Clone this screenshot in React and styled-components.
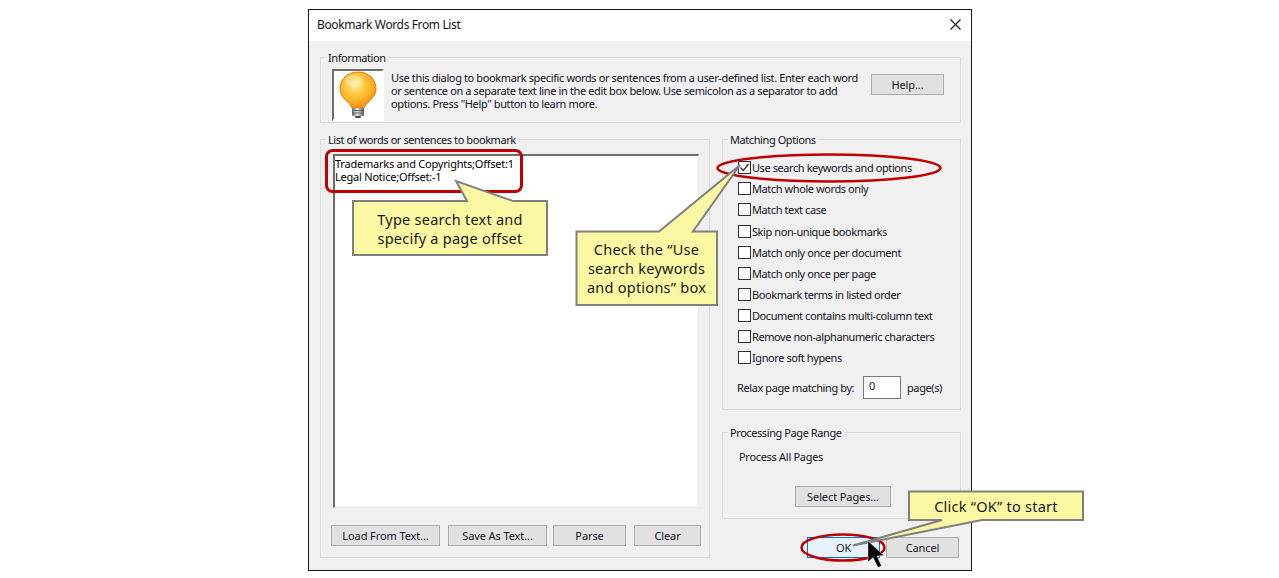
import React from "react";
import styled, { createGlobalStyle } from "styled-components";

const Global = createGlobalStyle`
  html, body { margin: 0; padding: 0; background: #fff; height: 578px; overflow: hidden; }
  body { font-family: "Noto Sans", "Open Sans", sans-serif; font-size: 11px; color: #14141e; }
  * { box-sizing: border-box; }
`;

const Page = styled.div`
  width: 1279px;
  height: 578px;
  padding: 9px 0 0 308px;
`;

const Dialog = styled.div`
  position: relative;
  width: 664px;
  height: 562px;
  border: 1px solid #1a1a1a;
  background: #f0f0f0;
  display: flex;
  flex-direction: column;
`;

const TitleBar = styled.div`
  height: 31px;
  flex: none;
  background: #fff;
  display: flex;
  align-items: center;
  justify-content: space-between;
  padding: 0 10px 2px 8px;
  font-size: 12px;
  letter-spacing: -0.37px;
`;

const Body = styled.div`
  flex: 1;
  padding: 9px 10px 0 11px;
  display: flex;
  flex-direction: column;
  gap: 9px;
`;

const Group = styled.fieldset`
  margin: ${(p) => p.$margin || "0"};
  min-width: 0;
  border: 1px solid #dcdcdc;
  padding: 0;
  height: ${(p) => p.$h}px;
  flex: none;
`;

const Legend = styled.legend`
  margin-left: 5px;
  padding: 0 2px;
  height: 14px;
  line-height: 16px;
  font-size: 11px;
  letter-spacing: -0.42px;
`;

const InfoRow = styled.div`
  display: flex;
  align-items: flex-start;
  padding: 5px 0 0 11px;
`;

const IconBox = styled.div`
  width: 52px;
  height: 52px;
  flex: none;
  border: 2px solid #fff;
  border-top-color: #6e6e6e;
  border-left-color: #6e6e6e;
  background: #fff;
  display: flex;
  align-items: center;
  justify-content: center;
`;

const InfoText = styled.p`
  margin: 2px 0 0 7px;
  width: 473px;
  flex: none;
  font-size: 11px;
  line-height: 13px;
  letter-spacing: -0.375px;
  white-space: nowrap;
`;

const Button = styled.button`
  width: ${(p) => p.$w}px;
  height: 21px;
  flex: none;
  padding: 0;
  margin: ${(p) => p.$margin || "0"};
  font: inherit;
  font-size: 11px;
  letter-spacing: -0.1px;
  color: #14141e;
  background: ${(p) => (p.$primary ? "#e5f1fb" : "#e1e1e1")};
  border: 1px solid ${(p) => (p.$primary ? "#0078d7" : "#adadad")};
`;

const Columns = styled.div`
  display: flex;
  gap: 12px;
`;

const LeftColumn = styled.div`
  width: 390px;
  flex: none;
`;

const RightColumn = styled.div`
  width: 239px;
  flex: none;
  display: flex;
  flex-direction: column;
`;

const Edit = styled.div`
  height: 354px;
  margin: 8px 0 0 12px;
  width: 366px;
  background: #fff;
  border: 2px solid #fafafa;
  border-top-color: #6e6e6e;
  border-left-color: #6e6e6e;
  border-right: 1px solid #e8e8e8;
  border-bottom: 1px solid #e8e8e8;
  padding: 1px 0 0 0;
  font-size: 11px;
  line-height: 13px;
  letter-spacing: -0.22px;
  white-space: pre;
  color: #000;
`;

const ListButtons = styled.div`
  display: flex;
  margin: 17px 0 0 10px;
`;

const OptionList = styled.div`
  padding: 11.2px 0 0 15px;
  display: grid;
  grid-auto-rows: 21.1px;
`;

const OptionRow = styled.label`
  display: flex;
  align-items: center;
  gap: 1px;
  letter-spacing: -0.42px;
  white-space: nowrap;
`;

const Box = styled.span`
  width: 13px;
  height: 13px;
  flex: none;
  background: #fff;
  border: 1px solid #333;
  display: flex;
  align-items: center;
  justify-content: center;
`;

const RelaxRow = styled.div`
  margin: 8px 0 0 14px;
  display: flex;
  align-items: center;
  letter-spacing: -0.4px;
  white-space: nowrap;
`;

const RelaxLabel = styled.span`
  width: 126px;
  flex: none;
`;

const NumberField = styled.div`
  width: 38px;
  height: 23px;
  flex: none;
  background: #fff;
  border: 1px solid #7a7a7a;
  padding: 1px 0 0 5px;
  margin-right: 6px;
  line-height: 16px;
`;

const RangeText = styled.div`
  padding: 10px 0 0 16px;
  letter-spacing: -0.3px;
  height: 39px;
  line-height: 16px;
`;

const RangeAction = styled.div`
  display: flex;
  margin: 8px 0 0 72px;
`;

const Actions = styled.div`
  display: flex;
  gap: 6px;
  margin: 18px 0 0 85px;
`;

const Overlay = styled.svg`
  position: absolute;
  left: -309px;
  top: -10px;
  width: 1279px;
  height: 578px;
  pointer-events: none;
`;

const Note = styled.div`
  position: absolute;
  left: ${(p) => p.$x - 309}px;
  top: ${(p) => p.$y - 10}px;
  width: ${(p) => p.$w}px;
  height: ${(p) => p.$h}px;
  padding-top: 1px;
  display: flex;
  align-items: center;
  justify-content: center;
  text-align: center;
  font-size: 14.5px;
  line-height: 19px;
  letter-spacing: 0.25px;
  color: #1a1a1a;
  white-space: pre;
`;

const CloseIcon = () => (
  <svg width="11" height="11" viewBox="0 0 11 11">
    <path d="M0.5 0.5 L10.5 10.5 M10.5 0.5 L0.5 10.5" stroke="#111" strokeWidth="1.1" fill="none" />
  </svg>
);

const Bulb = () => (
  <svg width="42" height="48" viewBox="0 0 42 48">
    <defs>
      <radialGradient id="glass" cx="0.42" cy="0.36" r="0.72">
        <stop offset="0" stopColor="#ffedA0" />
        <stop offset="0.3" stopColor="#ffcf4a" />
        <stop offset="0.7" stopColor="#fca91e" />
        <stop offset="1" stopColor="#ea8410" />
      </radialGradient>
      <linearGradient id="cap" x1="0" x2="1" y1="0" y2="0">
        <stop offset="0" stopColor="#6a6a6a" />
        <stop offset="0.45" stopColor="#e2e2e2" />
        <stop offset="1" stopColor="#5a5a5a" />
      </linearGradient>
    </defs>
    <path
      d="M21 1 C31.5 1 39 8.5 39 17.5 C39 25 33.5 28.5 29.5 33 C28 35 27.5 36 27 37 L15 37 C14.5 36 14 35 12.5 33 C8.5 28.5 3 25 3 17.5 C3 8.5 10.5 1 21 1 Z"
      fill="url(#glass)"
      stroke="#d97c10"
      strokeWidth="1"
    />
    <ellipse cx="17" cy="10" rx="9" ry="6" fill="#fff" opacity="0.3" />
    <rect x="15" y="37" width="12" height="8" rx="1" fill="url(#cap)" />
    <path d="M15 39.5 H27 M15 42 H27" stroke="#555" strokeWidth="0.8" />
    <rect x="18" y="45" width="6" height="2" rx="1" fill="#444" />
  </svg>
);

const Check = () => (
  <svg width="11" height="11" viewBox="0 0 11 11">
    <path d="M1.5 5.5 L4.3 8.5 L9.5 2" stroke="#333" strokeWidth="1.4" fill="none" />
  </svg>
);

const options = [
  "Use search keywords and options",
  "Match whole words only",
  "Match text case",
  "Skip non-unique bookmarks",
  "Match only once per document",
  "Match only once per page",
  "Bookmark terms in listed order",
  "Document contains multi-column text",
  "Remove non-alphanumeric characters",
  "Ignore soft hypens",
];

const FILL = "#fbf8a3";
const EDGE = "#808080";

const Annotations = () => (
  <Overlay viewBox="0 0 1279 578">
    <rect x="326.5" y="150.5" width="195" height="41" rx="6" fill="none" stroke="#c00000" strokeWidth="3" />
    <ellipse cx="829" cy="168" rx="111.5" ry="13.5" fill="none" stroke="#c00000" strokeWidth="2.5" />
    <ellipse cx="843" cy="547.5" rx="41.5" ry="13" fill="none" stroke="#c00000" strokeWidth="2.5" />
    <path
      d="M353 201 H467 L456 181 L513 201 H547 V255 H353 Z"
      fill={FILL}
      stroke={EDGE}
      strokeWidth="2"
    />
    <path
      d="M576.5 231.5 H659 L740 165 L693 231.5 H717 V305 H576.5 Z"
      fill={FILL}
      stroke={EDGE}
      strokeWidth="2"
    />
    <path
      d="M909 491.5 H1083 V520 H982 L853 545.5 L942 520 H909 Z"
      fill={FILL}
      stroke={EDGE}
      strokeWidth="2"
    />
    <path d="M868 541 L868 562 L873 557.5 L878 567.5 L881.5 566 L877 556 L884 555.5 Z" fill="#000" stroke="#fff" strokeWidth="0.4" />
  </Overlay>
);

export default function App() {
  return (
    <Page>
      <Global />
      <Dialog>
        <TitleBar>
          <span>Bookmark Words From List</span>
          <CloseIcon />
        </TitleBar>
        <Body>
          <Group $h={73}>
            <Legend>Information</Legend>
            <InfoRow>
              <IconBox>
                <Bulb />
              </IconBox>
              <InfoText>
                Use this dialog to bookmark specific words or sentences from a user-defined list. Enter each word
                <br />
                or sentence on a separate text line in the edit box below. Use semicolon as a separator to add
                <br />
                options. Press "Help" button to learn more.
              </InfoText>
              <Button $w={73} $margin="5px 0 0 7px">Help...</Button>
            </InfoRow>
          </Group>
          <Columns>
            <LeftColumn>
              <Group $h={426}>
                <Legend>List of words or sentences to bookmark</Legend>
                <Edit>{"Trademarks and Copyrights;Offset:1\nLegal Notice;Offset:-1"}</Edit>
                <ListButtons>
                  <Button $w={109}>Load From Text...</Button>
                  <Button $w={99} $margin="0 0 0 8px">Save As Text...</Button>
                  <Button $w={73} $margin="0 0 0 6px">Parse</Button>
                  <Button $w={67} $margin="0 0 0 8px">Clear</Button>
                </ListButtons>
              </Group>
            </LeftColumn>
            <RightColumn>
              <Group $h={278}>
                <Legend>Matching Options</Legend>
                <OptionList>
                  {options.map((o, i) => (
                    <OptionRow key={o}>
                      <Box>{i === 0 && <Check />}</Box>
                      {o}
                    </OptionRow>
                  ))}
                </OptionList>
                <RelaxRow>
                  <RelaxLabel>Relax page matching by:</RelaxLabel>
                  <NumberField>0</NumberField>
                  page(s)
                </RelaxRow>
              </Group>
              <Group $h={94} $margin="15px 0 0">
                <Legend>Processing Page Range</Legend>
                <RangeText>Process All Pages</RangeText>
                <RangeAction>
                  <Button $w={96}>Select Pages...</Button>
                </RangeAction>
              </Group>
              <Actions>
                <Button $w={73} $primary>OK</Button>
                <Button $w={73}>Cancel</Button>
              </Actions>
            </RightColumn>
          </Columns>
        </Body>
        <Annotations />
        <Note $x={353} $y={201} $w={194} $h={54}>{"Type search text and\nspecify a page offset"}</Note>
        <Note $x={576} $y={231} $w={141} $h={74}>{"Check the “Use\nsearch keywords\nand options” box"}</Note>
        <Note $x={909} $y={491} $w={174} $h={29}>Click “OK” to start</Note>
      </Dialog>
    </Page>
  );
}
